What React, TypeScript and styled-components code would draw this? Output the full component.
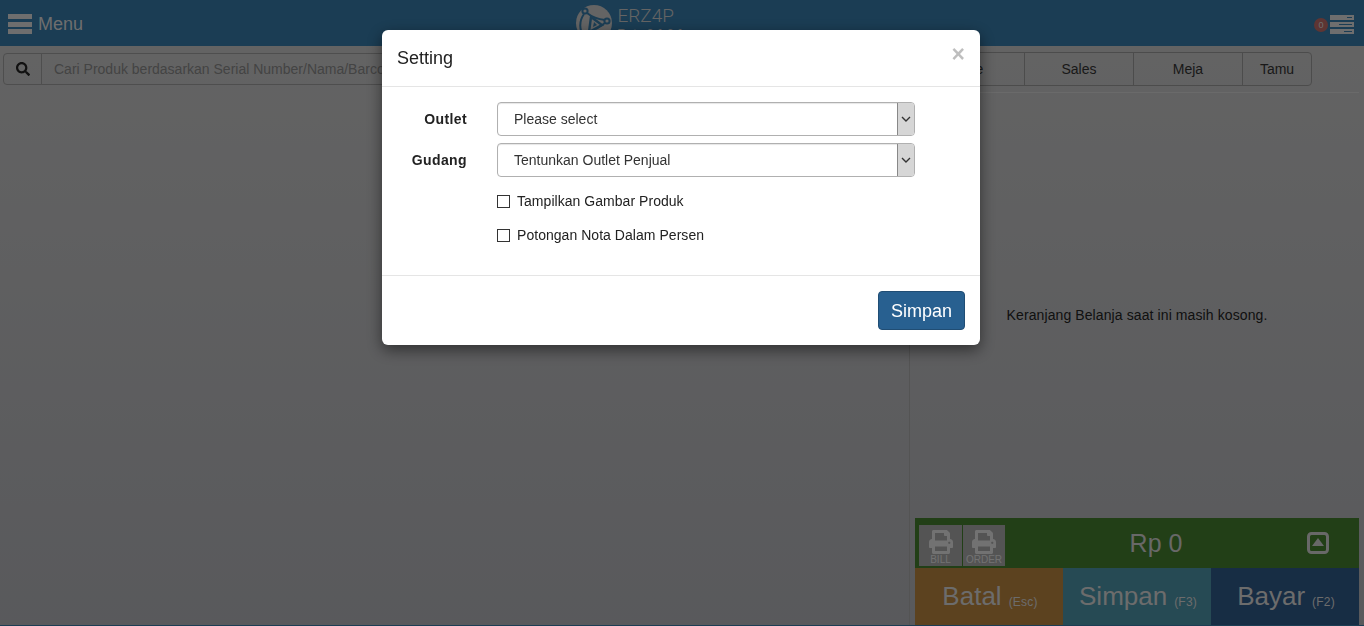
import React from "react";
import styled, { createGlobalStyle } from "styled-components";
import { FaSearch, FaPrint } from "react-icons/fa";

const Global = createGlobalStyle`
  html, body { margin: 0; padding: 0; height: 100%; overflow: hidden; background: #c4c4c4; }
  body { font-family: "Liberation Sans", Arial, sans-serif; font-size: 14px; color: #333; }
  * { box-sizing: border-box; }
`;

const Page = styled.div`
  width: 1364px;
  height: 626px;
  display: flex;
  flex-direction: column;
  background: linear-gradient(#c8c8c8, #b2b3b8);
`;
const Header = styled.header`
  height: 46px;
  flex: none;
  background: #367aa8;
  color: #dcdcdc;
  display: grid;
  grid-template-columns: 1fr auto 1fr;
  align-items: center;
  padding: 0 10px 0 8px;
`;
const MenuToggle = styled.div`
  display: flex;
  align-items: center;
  gap: 6px;
  font-size: 18px;
  padding-top: 2px;
`;
const Burger = styled.span`
  width: 24px;
  height: 20px;
  display: flex;
  flex-direction: column;
  justify-content: space-between;
  i { display: block; height: 5px; background: #dcdcdc; }
`;
const Logo = styled.div`
  display: flex;
  gap: 5px;
  height: 46px;
  padding-top: 5px;
  margin-left: -102px;
`;
const LogoWords = styled.div`
  display: flex;
  flex-direction: column;
`;
const LogoName = styled.span`
  font-family: "Roboto", "Liberation Sans", sans-serif;
  font-size: 19px;
  line-height: 22px;
  font-weight: 300;
  color: #c8c8c8;
`;
const LogoSub = styled.span`
  font-size: 12px;
  line-height: 14px;
  font-weight: 700;
  color: #c8c8c8;
`;
const HeaderRight = styled.div`
  display: flex;
  justify-content: flex-end;
  align-items: center;
  gap: 2px;
  padding-top: 3px;
`;
const Badge = styled.span`
  width: 14px;
  height: 14px;
  border-radius: 50%;
  background: #bd6a66;
  color: #dcdcdc;
  font-size: 9px;
  line-height: 14px;
  text-align: center;
`;
const Main = styled.main`
  flex: 1;
  display: flex;
  min-height: 0;
  border-bottom: 1px solid #367aa8;
`;
const LeftPane = styled.section`
  width: 910px;
  flex: none;
  padding: 7px 0 0 3px;
  border-right: 1px solid #a8a8a8;
`;
const SearchGroup = styled.div`
  display: flex;
  height: 32px;
`;
const SearchAddon = styled.span`
  width: 39px;
  flex: none;
  display: flex;
  align-items: center;
  justify-content: center;
  border: 1px solid #9c9c9c;
  border-radius: 4px 0 0 4px;
  color: #222;
  font-size: 14px;
`;
const SearchField = styled.div`
  flex: 1;
  margin-left: -1px;
  padding: 0 12px;
  line-height: 30px;
  color: #888;
  border: 1px solid #9c9c9c;
  border-radius: 0 4px 4px 0;
  white-space: nowrap;
  overflow: hidden;
`;
const RightPane = styled.aside`
  flex: 1;
  display: flex;
  flex-direction: column;
  padding: 6px 5px 0;
  min-width: 0;
`;
const Tabs = styled.nav`
  display: flex;
  height: 34px;
  width: 397px;
  border: 1px solid #999;
  border-radius: 0 4px 4px 0;
  flex: none;
`;
const Tab = styled.div<{ $w: number }>`
  width: ${(p) => p.$w}px;
  flex: none;
  text-align: center;
  line-height: 32px;
  border-right: 1px solid #999;
  &:last-child { border-right: 0; }
`;
const Rule = styled.hr`
  width: 100%;
  margin: 6px 0 0;
  border: 0;
  border-top: 1px solid #d4d4d4;
`;
const Empty = styled.p`
  flex: 1;
  margin: 0;
  padding-top: 212px;
  text-align: center;
  line-height: 20px;
  letter-spacing: 0.1px;
  color: #222;
`;
const TotalBar = styled.div`
  height: 50px;
  flex: none;
  display: flex;
  align-items: center;
  background: #447e2e;
  padding: 0 4px;
  color: #d0d0d0;
`;
const PrintGroup = styled.div`
  display: flex;
  gap: 1px;
  height: 41px;
  align-self: flex-start;
  margin-top: 7px;
`;
const PrintButton = styled.div<{ $w: number }>`
  width: ${(p) => p.$w}px;
  background: #a8a8a8;
  color: #e4e4e4;
  display: flex;
  flex-direction: column;
  align-items: center;
  font-size: 10px;
  line-height: 10px;
  padding-top: 5px;
  svg { font-size: 24px; }
  span { margin-top: 1px; }
`;
const TotalValue = styled.div`
  flex: 1;
  text-align: center;
  font-size: 25px;
`;
const Collapse = styled.span`
  display: flex;
  margin-right: 26px;
`;
const Actions = styled.div`
  height: 57px;
  flex: none;
  display: grid;
  grid-template-columns: repeat(3, 148px);
`;
const Action = styled.div<{ $bg: string }>`
  background: ${(p) => p.$bg};
  color: #d8d8d8;
  display: flex;
  align-items: center;
  justify-content: center;
  gap: 7px;
  padding-left: 2px;
  font-size: 26px;
  small { font-size: 12px; letter-spacing: 0.2px; margin-top: 10px; }
`;
const Backdrop = styled.div`
  position: fixed;
  inset: 0;
  background: rgba(0, 0, 0, 0.5);
`;
const Modal = styled.div`
  position: fixed;
  left: 382px;
  top: 30px;
  width: 598px;
  height: 315px;
  display: flex;
  flex-direction: column;
  background: #fff;
  border-radius: 6px;
  box-shadow: 0 5px 15px rgba(0, 0, 0, 0.5);
`;
const ModalHeader = styled.div`
  height: 57px;
  flex: none;
  display: flex;
  align-items: center;
  justify-content: space-between;
  padding: 0 15px;
  border-bottom: 1px solid #e5e5e5;
`;
const Title = styled.h4`
  margin: 0;
  font-size: 18px;
  font-weight: 400;
  color: #222;
`;
const Close = styled.span`
  font-size: 23px;
  font-weight: 700;
  color: #000;
  opacity: 0.25;
  line-height: 1;
  margin-top: -8px;
`;
const ModalBody = styled.div`
  flex: 1;
  padding: 15px 65px 0 15px;
  display: flex;
  flex-direction: column;
  gap: 7px;
`;
const Row = styled.div`
  display: grid;
  grid-template-columns: 70px 1fr;
  column-gap: 30px;
  align-items: center;
`;
const Label = styled.label`
  font-weight: 700;
  text-align: right;
  letter-spacing: 0.4px;
  color: #222;
`;
const SelectBox = styled.div`
  height: 34px;
  display: flex;
  align-items: center;
  justify-content: space-between;
  border: 1px solid #b0b0b0;
  border-radius: 4px;
  box-shadow: inset 0 1px 1px rgba(0, 0, 0, 0.1);
  padding-left: 16px;
  color: #333;
`;
const SelectArrow = styled.span`
  width: 17px;
  height: 32px;
  display: flex;
  align-items: center;
  justify-content: center;
  background: #d6d6d6;
  border-left: 1px solid #888;
  border-radius: 0 3px 3px 0;
`;
const Checks = styled.div`
  padding: 7px 0 0 100px;
  display: flex;
  flex-direction: column;
  gap: 14px;
`;
const Check = styled.label`
  display: flex;
  align-items: center;
  gap: 7px;
  height: 20px;
  letter-spacing: 0.04px;
  color: #222;
`;
const Box = styled.span`
  width: 13px;
  height: 13px;
  border: 1px solid #333;
  background: #fff;
`;
const ModalFooter = styled.div`
  height: 70px;
  flex: none;
  display: flex;
  justify-content: flex-end;
  align-items: flex-start;
  padding: 15px;
  border-top: 1px solid #e5e5e5;
`;
const SaveButton = styled.button`
  width: 87px;
  height: 39px;
  padding: 2px 0 0;
  background: #286090;
  color: #fff;
  border: 1px solid #204d74;
  border-radius: 4px;
  font-family: inherit;
  font-size: 18px;
`;

const Chevron = () => (
  <svg width="10" height="6" viewBox="0 0 10 6" fill="none" stroke="#333" strokeWidth="1.4">
    <path d="M1 1l4 4 4-4" />
  </svg>
);

const LogoMark = () => (
  <svg width="36" height="36" viewBox="0 0 36 36">
    <circle cx="18" cy="18" r="18" fill="#c8c8c8" />
    <g fill="none" stroke="#367aa8" strokeWidth="2">
      <circle cx="9" cy="6" r="2.6" />
      <circle cx="31" cy="16" r="2.6" />
      <path d="M8 9C3 16 3 25 8 31M11 8c5 4 9 6 18 7M29 18l-9 6" />
      <path d="M15 12l-2 15 13-7z" strokeWidth="2.4" />
    </g>
    <path d="M18 17l-1 5 4-2z" fill="#367aa8" />
  </svg>
);

const ServerIcon = () => (
  <svg width="24" height="19" viewBox="0 0 24 19">
    <path
      fill="#dcdcdc"
      fillRule="evenodd"
      d="M0 0h24v5H0zM17 2v1h5V2zM0 7h24v5H0zM9 9v1h13V9zM0 14h24v5H0zM14 16v1h8v-1z"
    />
  </svg>
);

const CaretBox = () => (
  <svg width="22" height="22" viewBox="0 0 22 22">
    <rect x="1.5" y="1.5" width="19" height="19" rx="3" fill="none" stroke="#d0d0d0" strokeWidth="3" />
    <path d="M11 6l6 8H5z" fill="#d0d0d0" />
  </svg>
);

export default function App() {
  return (
    <>
      <Global />
      <Page>
        <Header>
          <MenuToggle>
            <Burger><i /><i /><i /></Burger>
            Menu
          </MenuToggle>
          <Logo>
            <LogoMark />
            <LogoWords>
              <LogoName>ERZ4P</LogoName>
              <LogoSub>Beta 2.1.6.1</LogoSub>
            </LogoWords>
          </Logo>
          <HeaderRight>
            <Badge>0</Badge>
            <ServerIcon />
          </HeaderRight>
        </Header>
        <Main>
          <LeftPane>
            <SearchGroup>
              <SearchAddon><FaSearch /></SearchAddon>
              <SearchField>Cari Produk berdasarkan Serial Number/Nama/Barcode</SearchField>
            </SearchGroup>
          </LeftPane>
          <RightPane>
            <Tabs>
              <Tab $w={109}>Tipe</Tab>
              <Tab $w={109}>Sales</Tab>
              <Tab $w={109}>Meja</Tab>
              <Tab $w={68}>Tamu</Tab>
            </Tabs>
            <Rule />
            <Empty>Keranjang Belanja saat ini masih kosong.</Empty>
            <TotalBar>
              <PrintGroup>
                <PrintButton $w={43}><FaPrint /><span>BILL</span></PrintButton>
                <PrintButton $w={42}><FaPrint /><span>ORDER</span></PrintButton>
              </PrintGroup>
              <TotalValue>Rp 0</TotalValue>
              <Collapse><CaretBox /></Collapse>
            </TotalBar>
            <Actions>
              <Action $bg="#b8843f">Batal <small>(Esc)</small></Action>
              <Action $bg="#4d94a8">Simpan <small>(F3)</small></Action>
              <Action $bg="#2f5a88">Bayar <small>(F2)</small></Action>
            </Actions>
          </RightPane>
        </Main>
        <Backdrop />
        <Modal>
          <ModalHeader>
            <Title>Setting</Title>
            <Close>×</Close>
          </ModalHeader>
          <ModalBody>
            <Row>
              <Label>Outlet</Label>
              <SelectBox>Please select<SelectArrow><Chevron /></SelectArrow></SelectBox>
            </Row>
            <Row>
              <Label>Gudang</Label>
              <SelectBox>Tentunkan Outlet Penjual<SelectArrow><Chevron /></SelectArrow></SelectBox>
            </Row>
            <Checks>
              <Check><Box />Tampilkan Gambar Produk</Check>
              <Check><Box />Potongan Nota Dalam Persen</Check>
            </Checks>
          </ModalBody>
          <ModalFooter>
            <SaveButton>Simpan</SaveButton>
          </ModalFooter>
        </Modal>
      </Page>
    </>
  );
}
